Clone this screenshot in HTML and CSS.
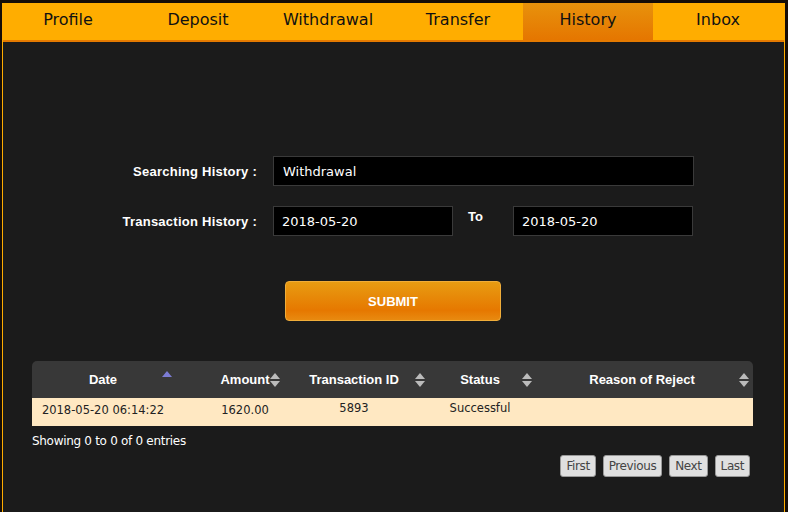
FILE: index.html
```html
<!DOCTYPE html>
<html lang="en">
<head>
    <title>History</title>
    <link rel="stylesheet" href="styles.css">
</head>
<body>
    <div class="wrapper">
        <div class="navbar">
            <a href="#">Profile</a>
            <a href="#">Deposit</a>
            <a href="#">Withdrawal</a>
            <a href="#">Transfer</a>
            <a href="#" class="active">History</a>
            <a href="#">Inbox</a>
        </div>

        <div class="content">
            <form class="search-form">
                <div class="form-row">
                    <label>Searching History :</label>
                    <input type="text" class="input-wide" value="Withdrawal">
                </div>
                <div class="form-row">
                    <label>Transaction History :</label>
                    <input type="text" class="input-date" value="2018-05-20">
                    <span class="to-label">To</span>
                    <input type="text" class="input-date" value="2018-05-20">
                </div>
                <div class="submit-row">
                    <button type="button" class="btn-submit">SUBMIT</button>
                </div>
            </form>

            <table class="history-table">
                <thead>
                    <tr>
                        <th class="col-date">Date<i class="sort asc"></i></th>
                        <th class="col-amount">Amount<i class="sort"></i></th>
                        <th class="col-id">Transaction ID<i class="sort"></i></th>
                        <th class="col-status">Status<i class="sort"></i></th>
                        <th class="col-reason">Reason of Reject<i class="sort"></i></th>
                    </tr>
                </thead>
                <tbody>
                    <tr>
                        <td class="col-date">2018-05-20 06:14:22</td>
                        <td class="col-amount">1620.00</td>
                        <td class="col-id">5893</td>
                        <td class="col-status">Successful</td>
                        <td class="col-reason"></td>
                    </tr>
                </tbody>
            </table>

            <div class="table-info">Showing 0 to 0 of 0 entries</div>

            <div class="pagination">
                <a href="#">First</a>
                <a href="#">Previous</a>
                <a href="#">Next</a>
                <a href="#">Last</a>
            </div>
        </div>
    </div>
</body>
</html>
```

FILE: styles.css
```css
body {
    font-family: "DejaVu Sans", sans-serif;
    background-color: #150d07;
    margin: 0;
    padding: 0;
}

.wrapper {
    margin: 3px 0 0 2px;
    width: 781px;
    min-height: 520px;
    background-color: #1b1b1b;
    border-left: 1px solid #ffad00;
    border-right: 1px solid #ffad00;
}

.navbar {
    display: flex;
    background-color: #ffad00;
    border-bottom: 2px solid #e57a00;
}

.navbar a {
    width: 130px;
    height: 37px;
    line-height: 34px;
    text-align: center;
    color: #111;
    text-decoration: none;
    font-size: 16px;
}

.navbar a.active {
    background: linear-gradient(#e8920c, #e57600);
}

.content {
    padding: 114px 0 0 29px;
    color: white;
}

.search-form {
    display: flex;
    flex-direction: column;
    gap: 20px;
    margin-left: -29px;
}

.form-row {
    display: flex;
    align-items: center;
}

.form-row label {
    width: 254px;
    margin-right: 16px;
    text-align: right;
    font-family: "Liberation Sans", Arial, sans-serif;
    font-weight: bold;
    font-size: 13px;
    letter-spacing: 0.25px;
}

.form-row input {
    height: 30px;
    box-sizing: border-box;
    background: #000;
    border: 1px solid #3a3a3a;
    color: white;
    font-family: "DejaVu Sans", sans-serif;
    font-size: 13px;
    padding: 0 9px;
}

.form-row input.input-date {
    padding: 0 8px;
}

.input-wide {
    width: 421px;
}

.input-date {
    width: 180px;
}

.to-label {
    width: 45px;
    padding-left: 15px;
    align-self: flex-start;
    padding-top: 3px;
    font-family: "Liberation Sans", Arial, sans-serif;
    font-size: 13px;
    font-weight: bold;
}

.submit-row {
    padding: 25px 0 0 282px;
}

.btn-submit {
    width: 216px;
    height: 40px;
    background: linear-gradient(#e89c12, #e67800 75%, #e88a10);
    border: 1px solid #f0ad3a;
    border-radius: 4px;
    color: white;
    font-family: "Liberation Sans", Arial, sans-serif;
    font-weight: bold;
    font-size: 13px;
    cursor: pointer;
}

.history-table {
    margin-top: 40px;
    width: 721px;
    border-collapse: separate;
    border-spacing: 0;
    table-layout: fixed;
}

.history-table th,
.history-table td {
    box-sizing: border-box;
    text-align: center;
    padding: 0;
}

.history-table th {
    position: relative;
    height: 37px;
    background-color: #383838;
    color: white;
    font-family: "Liberation Sans", Arial, sans-serif;
    font-size: 13px;
    font-weight: bold;
}

.history-table th:first-child {
    border-top-left-radius: 5px;
}

.history-table th:last-child {
    border-top-right-radius: 5px;
}

.history-table .col-date { width: 142px; }
.history-table .col-amount { width: 109px; padding-left: 33px; }
.history-table .col-id { width: 145px; padding-right: 3px; }
.history-table .col-status { width: 107px; padding-right: 3px; }
.history-table .col-reason { padding-right: 4px; }

.sort {
    position: absolute;
    right: 3px;
    top: 12px;
    width: 0;
    height: 0;
    border-left: 5px solid transparent;
    border-right: 5px solid transparent;
    border-bottom: 6px solid #bbb;
}

.sort::after {
    content: "";
    position: absolute;
    left: -5px;
    top: 8px;
    border-left: 5px solid transparent;
    border-right: 5px solid transparent;
    border-top: 6px solid #bbb;
}

.sort.asc {
    border-bottom-color: #7c7cd4;
    top: 10px;
    right: 2px;
}

.sort.asc::after {
    display: none;
}

.history-table .col-reason .sort { right: 4px; }

.history-table td {
    height: 28px;
    background-color: #ffe8c2;
    color: #222;
    font-size: 11.5px;
    vertical-align: top;
    padding-top: 3px;
}

.history-table td.col-date,
.history-table td.col-amount {
    padding-top: 5px;
}

.table-info {
    margin-top: 8px;
    font-size: 12px;
    letter-spacing: -0.3px;
}

.pagination {
    display: flex;
    justify-content: flex-end;
    gap: 7px;
    width: 718px;
    margin-top: 7px;
}

.pagination a {
    background-color: #e0e0e0;
    border: 1px solid #999;
    border-radius: 3px;
    color: #444;
    text-decoration: none;
    font-size: 12px;
    padding: 3px 5px;
    letter-spacing: -0.4px;
}
```
